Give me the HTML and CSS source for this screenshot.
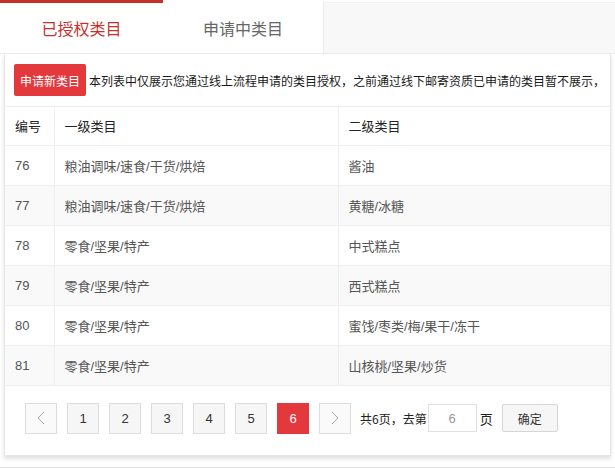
FILE: index.html
```html
<!DOCTYPE html>
<html lang="zh-CN">
<head>
    <meta charset="UTF-8">
    <meta name="viewport" content="width=device-width, initial-scale=1.0">
    <title>类目授权</title>
    <link rel="stylesheet" href="styles.css">
</head>
<body>
    <div class="tabs">
        <div class="tab active">已授权类目</div>
        <div class="tab">申请中类目</div>
        <div class="tab-fill"></div>
    </div>

    <div class="panel">
        <div class="toolbar">
            <button class="btn-apply">申请新类目</button>
            <span class="notice">本列表中仅展示您通过线上流程申请的类目授权，之前通过线下邮寄资质已申请的类目暂不展示，</span>
        </div>

        <table class="cat-table">
            <thead>
                <tr>
                    <th class="col-no">编号</th>
                    <th class="col-first">一级类目</th>
                    <th>二级类目</th>
                </tr>
            </thead>
            <tbody>
                <tr><td>76</td><td>粮油调味/速食/干货/烘焙</td><td>酱油</td></tr>
                <tr><td>77</td><td>粮油调味/速食/干货/烘焙</td><td>黄糖/冰糖</td></tr>
                <tr><td>78</td><td>零食/坚果/特产</td><td>中式糕点</td></tr>
                <tr><td>79</td><td>零食/坚果/特产</td><td>西式糕点</td></tr>
                <tr><td>80</td><td>零食/坚果/特产</td><td>蜜饯/枣类/梅/果干/冻干</td></tr>
                <tr><td>81</td><td>零食/坚果/特产</td><td>山核桃/坚果/炒货</td></tr>
            </tbody>
        </table>

        <div class="pager">
            <a class="page-btn arrow">
                <svg width="8" height="14" viewBox="0 0 8 14"><polyline points="7,1 1,7 7,13" fill="none" stroke="#aaa" stroke-width="1"/></svg>
            </a>
            <a class="page-btn">1</a>
            <a class="page-btn">2</a>
            <a class="page-btn">3</a>
            <a class="page-btn">4</a>
            <a class="page-btn">5</a>
            <a class="page-btn current">6</a>
            <a class="page-btn arrow">
                <svg width="8" height="14" viewBox="0 0 8 14"><polyline points="1,1 7,7 1,13" fill="none" stroke="#aaa" stroke-width="1"/></svg>
            </a>
            <span class="jump-text">共6页，去第</span>
            <input class="jump-input" type="text" value="6">
            <span class="jump-unit">页</span>
            <button class="btn-ok">确定</button>
        </div>
    </div>

    <div class="bottom-line"></div>
</body>
</html>
```

FILE: styles.css
```css
* {
    margin: 0;
    padding: 0;
    box-sizing: border-box;
}

body {
    background-color: #ffffff;
    font-family: "Liberation Sans", "Noto Sans CJK SC", sans-serif;
    color: #333;
    width: 615px;
    overflow: hidden;
}

/* tabs */
.tabs {
    display: flex;
    height: 54px;
    border-bottom: 1px solid #ebebeb;
}

.tab {
    width: 161px;
    display: flex;
    align-items: center;
    justify-content: center;
    font-size: 16px;
    color: #666;
    background-color: #fff;
    border-top: 3px solid transparent;
    border-right: 1px solid #ececec;
}

.tab.active {
    width: 163px;
    color: #c8302e;
    border-top-color: #c9302c;
    border-right: none;
}

.tab-fill {
    flex: 1;
    background-color: #f8f8f8;
    margin-top: 2px;
    border-top: 1px solid #f0f0f0;
}

/* panel */
.panel {
    margin-left: 4px;
    width: 607px;
    border: 1px solid #e6e6e6;
    border-top: none;
    box-shadow: 0 3px 4px rgba(0, 0, 0, 0.12);
}

.toolbar {
    display: flex;
    align-items: center;
    gap: 3px;
    height: 53px;
    padding-left: 9px;
    border-bottom: 1px solid #eeeeee;
    white-space: nowrap;
}

.btn-apply {
    flex-shrink: 0;
    height: 32px;
    width: 72px;
    background-color: #e4393c;
    color: #fff;
    border: none;
    border-radius: 2px;
    font-family: "Noto Sans CJK SC", sans-serif;
    font-size: 12px;
}

.notice {
    font-size: 12px;
    color: #1a1a1a;
    font-family: "Noto Sans CJK SC", sans-serif;
}

/* table */
.cat-table {
    width: 100%;
    border-collapse: collapse;
    font-size: 13px;
    table-layout: fixed;
}

.cat-table th,
.cat-table td {
    text-align: left;
    font-weight: normal;
    padding: 0 10px;
    border-right: 1px solid #eeeeee;
    border-bottom: 1px solid #eeeeee;
}

.cat-table th:last-child,
.cat-table td:last-child {
    border-right: none;
}

.cat-table th {
    height: 38px;
    color: #222;
}

.cat-table td {
    height: 40px;
    color: #555;
}

.cat-table tbody tr:nth-child(even) {
    background-color: #f9f9f9;
}

.col-no {
    width: 49px;
}

.col-first {
    width: 284px;
}

/* pager */
.pager {
    display: flex;
    align-items: center;
    padding: 17px 20px 21px;
    font-size: 13px;
}

.page-btn {
    width: 32px;
    height: 31px;
    margin-right: 10px;
    display: flex;
    align-items: center;
    justify-content: center;
    border: 1px solid #dddddd;
    background-color: #f6f6f6;
    color: #333;
}

.page-btn.arrow {
    background-color: #fafafa;
}

.page-btn.current {
    background-color: #e4393c;
    border-color: #e4393c;
    color: #fff;
}

.pager .page-btn:nth-child(8) {
    margin-right: 9px;
}

.jump-text,
.jump-unit {
    font-family: "Noto Sans CJK SC", sans-serif;
    font-size: 12px;
    color: #222;
}

.jump-input {
    width: 49px;
    height: 28px;
    margin: 0 3px 0 1px;
    border: 1px solid #e0e0e0;
    text-align: center;
    color: #999;
    font-size: 13px;
    font-family: "Liberation Sans", sans-serif;
}

.jump-unit {
    font-size: 13px;
}

.btn-ok {
    width: 56px;
    height: 28px;
    margin-left: 9px;
    background-color: #f6f6f6;
    border: 1px solid #d6d6d6;
    border-radius: 2px;
    color: #333;
    font-family: "Noto Sans CJK SC", sans-serif;
    font-size: 12px;
}

.bottom-line {
    margin-top: 11px;
    border-top: 1px solid #e2e2e2;
}
```
